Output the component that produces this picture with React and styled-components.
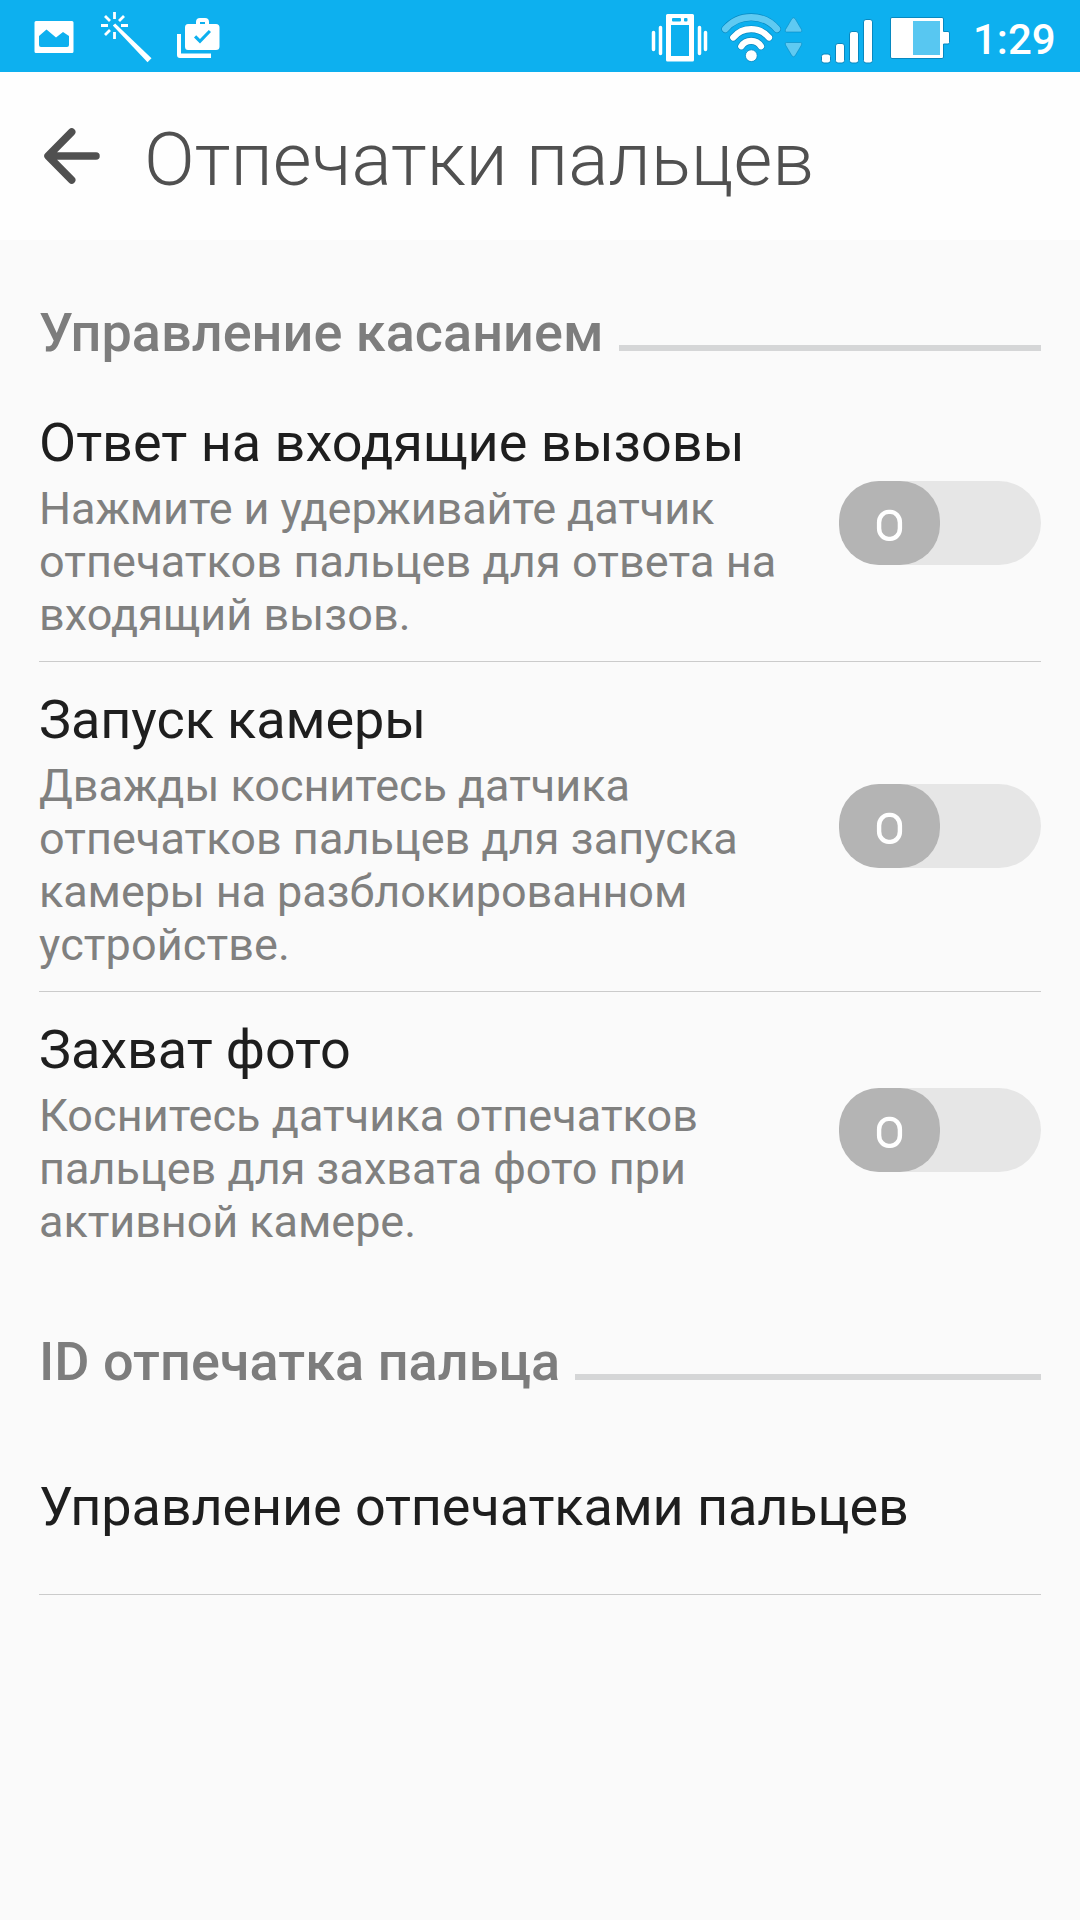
import styled, { createGlobalStyle } from 'styled-components';

const rows = [
  {
    title: 'Ответ на входящие вызовы',
    titleSpacing: 0,
    lines: [
      { text: 'Нажмите и удерживайте датчик', spacing: -0.087 },
      { text: 'отпечатков пальцев для ответа на', spacing: 0.1 },
      { text: 'входящий вызов.', spacing: 0.07 },
    ],
  },
  {
    title: 'Запуск камеры',
    titleSpacing: -0.08,
    lines: [
      { text: 'Дважды коснитесь датчика', spacing: -0.04 },
      { text: 'отпечатков пальцев для запуска', spacing: 0.05 },
      { text: 'камеры на разблокированном', spacing: -0.09 },
      { text: 'устройстве.', spacing: 0.12 },
    ],
  },
  {
    title: 'Захват фото',
    titleSpacing: -0.08,
    lines: [
      { text: 'Коснитесь датчика отпечатков', spacing: 0.04 },
      { text: 'пальцев для захвата фото при', spacing: 0.02 },
      { text: 'активной камере.', spacing: -0.06 },
    ],
    last: true,
  },
];

function LeftIcons() {
  return (
    <svg width="270" height="72" viewBox="0 0 270 72" fill="#fff">
      {/* picture */}
      <path
        fillRule="evenodd"
        d="M36 21h36q1.500 0 1.500 1.500v29q0 1.500-1.500 1.500H36q-1.500 0-1.500-1.500v-29q0-1.500 1.500-1.500ZM39 36v9q0 2 2 2h26q2 0 2-2v-9l-6-4-7 5.500L46.500 29.500Z"
      />
      {/* magic wand */}
      <path
        d="M114.500 12v7M114.500 32v7M101 25.500h7M121 25.500h7M105 16l5 5M124 16l-5 5M105 35l5-5"
        stroke="#fff"
        strokeWidth="2.800"
        fill="none"
      />
      <path d="M112.800 25.500l2.400-2L151.500 58.300l-4 4Z" />
      {/* work bag */}
      <path d="M177 34h4v19.500h30v4.500h-31q-3 0-3-3Z" />
      <path
        fillRule="evenodd"
        d="M188 24h8v-2q0-4 4-4h5q4 0 4 4v2h7q3.500 0 3.500 3.500v19q0 3.500-3.500 3.500h-28q-3 0-3-3.500v-19q0-3.500 3-3.500ZM200 24h5v-2h-5ZM194 37.500l6 6 11-11.500-2.200-2L200 39l-3.800-3.800Z"
      />
    </svg>
  );
}

function RightIcons() {
  return (
    <svg width="310" height="72" viewBox="640 0 310 72" fill="#fff">
      {/* vibration */}
      <path
        fillRule="evenodd"
        d="M667.500 14h25q1.500 0 1.500 1.500v44.500q0 1.500-1.500 1.500h-25q-1.500 0-1.500-1.500v-44.500q0-1.500 1.500-1.500ZM671 25v31h18V25ZM673 18q-1 0-1 1v1.500q0 1 1 1h7q1 0 1-1v-1.500q0-1-1-1ZM685 18q-1 0-1 1v1.500q0 1 1 1h1.500q1 0 1-1v-1.500q0-1-1-1Z"
      />
      <path d="M653.500 32.500v17M660.500 27.500v26M699.500 27.500v26M705.500 32.500v17" stroke="#fff" strokeWidth="3.500" strokeLinecap="round" />
      {/* wifi */}
      <g fill="none" strokeLinecap="round">
        <path d="M725.300 29A34.200 34.200 0 0 1 777 29" stroke="#0788c0" strokeWidth="7.800" />
        <path d="M725.300 29A34.200 34.200 0 0 1 777 29" stroke="#5fcaf2" strokeWidth="6.600" />
        <path d="M733.300 37.500A23.300 23.300 0 0 1 769 37.500" stroke="#0788c0" strokeWidth="7.600" />
        <path d="M733.300 37.500A23.300 23.300 0 0 1 769 37.500" stroke="#fff" strokeWidth="6.300" />
        <path d="M741.300 46.300A11.600 11.600 0 0 1 761 46.300" stroke="#0788c0" strokeWidth="7.600" />
        <path d="M741.300 46.300A11.600 11.600 0 0 1 761 46.300" stroke="#fff" strokeWidth="6.300" />
      </g>
      <circle cx="751.300" cy="55.700" r="5.900" stroke="#0788c0" strokeWidth=".8" />
      <g fill="#5fcaf2" stroke="#0788c0" strokeWidth=".6" strokeLinejoin="round">
        <path d="M792 18.500q1.500-1.500 3 0l6.500 11q1 2.500-1 2.500h-14q-2 0-1-2.500Z" />
        <path d="M786.500 42.500h14q2 0 1 2.500l-6.500 11q-1.500 1.500-3 0l-6.500-11q-1-2.500 1-2.500Z" />
      </g>
      {/* signal and battery */}
      <g stroke="#0788c0" strokeWidth="1">
        <rect x="821.500" y="54" width="9" height="9" rx="2.500" />
        <rect x="835.500" y="43.500" width="9" height="19.500" rx="2.500" />
        <rect x="849.500" y="31.500" width="9" height="31.500" rx="2.500" />
        <rect x="863.500" y="19.500" width="9" height="43.500" rx="2.500" />
        <path d="M892 17.500h50q1.500 0 1.500 1.500v12.500h4.500q1.500 0 1.500 1.500v9.500q0 1.500-1.500 1.500h-4.500v13q0 1.500-1.500 1.500h-50q-1.500 0-1.500-1.500v-38q0-1.500 1.500-1.500Z" />
      </g>
      <rect x="913" y="21" width="27" height="34" fill="#58c7f1" />
    </svg>
  );
}

function Toggle() {
  return (
    <StToggle role="switch" aria-checked="false">
      <StKnob>
        <svg width="27" height="33" viewBox="0 0 27 33">
          <rect x="3.100" y="2.900" width="20.800" height="27" rx="9.500" ry="10.500" fill="none" stroke="#fff" strokeWidth="4.400" />
        </svg>
      </StKnob>
    </StToggle>
  );
}

function Section({ title }) {
  return (
    <StSection>
      <h2>{title}</h2>
      <StRule />
    </StSection>
  );
}

export default function App() {
  return (
    <StScreen>
      <GlobalStyle />
      <StStatusBar>
        <LeftIcons />
        <StStatusRight>
          <RightIcons />
          <StClock>1:29</StClock>
        </StStatusRight>
      </StStatusBar>
      <StHeader>
        <svg width="58" height="58" viewBox="0 0 58 58">
          <path
            d="M28.700 5L5 29l23.700 24M6 29h47"
            fill="none"
            stroke="#505050"
            strokeWidth="7.500"
            strokeLinecap="round"
            strokeLinejoin="round"
          />
        </svg>
        <h1>Отпечатки пальцев</h1>
      </StHeader>
      <StContent>
        <Section title="Управление касанием" />
        {rows.map(({ title, titleSpacing, lines, last }) => (
          <StRow key={title} $last={last}>
            <div>
              <StTitle $spacing={titleSpacing}>{title}</StTitle>
              <StText>
                {lines.map(({ text, spacing }) => (
                  <StLine key={text} $spacing={spacing}>
                    {text}
                  </StLine>
                ))}
              </StText>
            </div>
            <Toggle />
          </StRow>
        ))}
        <Section title="ID отпечатка пальца" />
        <StLink>
          <StTitle $spacing={-0.12}>Управление отпечатками пальцев</StTitle>
        </StLink>
      </StContent>
    </StScreen>
  );
}

const GlobalStyle = createGlobalStyle`
  * {
    box-sizing: border-box;
  }
  body {
    margin: 0;
    background: #fafafa;
    font-family: Roboto, 'Noto Sans', sans-serif;
  }
  h1, h2, h3, p {
    margin: 0;
  }
  svg {
    display: block;
    flex-shrink: 0;
  }
`;
const StScreen = styled.div`
  width: 1080px;
  height: 1920px;
  overflow: hidden;
  background: #fafafa;
`;
const StStatusBar = styled.div`
  display: flex;
  justify-content: space-between;
  height: 72px;
  background: #0db0ef;
`;
const StStatusRight = styled.div`
  display: flex;
  width: 440px;
`;
const StClock = styled.span`
  padding: 7px 0 0 23px;
  font-size: 42px;
  line-height: 66px;
  font-weight: 500;
  color: #fff;
`;
const StHeader = styled.header`
  display: flex;
  height: 168px;
  padding: 0 43px;
  background: #fefefe;
  svg {
    margin-top: 55px;
  }
  h1 {
    margin: 43px 0 0 43px;
    font-size: 75px;
    line-height: 88px;
    font-weight: 300;
    color: #505050;
    white-space: nowrap;
  }
`;
const StContent = styled.main`
  padding: 0 39px;
`;
const StSection = styled.div`
  display: flex;
  gap: 15px;
  height: 145px;
  padding-top: 61px;
  h2 {
    font-size: 54px;
    line-height: 64px;
    font-weight: 500;
    letter-spacing: 0.04px;
    color: #7d7d7d;
    white-space: nowrap;
  }
`;
const StRule = styled.div`
  flex: 1;
  height: 6px;
  margin-top: 44px;
  background: #d5d6d7;
`;
const StRow = styled.div`
  display: flex;
  justify-content: space-between;
  padding: 26px 0 20px;
  border-bottom: 1px solid ${({ $last }) => ($last ? 'transparent' : '#cbcbcb')};
`;
const StTitle = styled.h3`
  font-size: 54px;
  line-height: 64px;
  font-weight: 400;
  letter-spacing: ${({ $spacing }) => $spacing}px;
  color: #1e1e1e;
  white-space: nowrap;
`;
const StText = styled.p`
  margin-top: 7px;
  font-size: 45px;
  line-height: 53px;
  color: #80807f;
`;
const StLine = styled.span`
  display: block;
  letter-spacing: ${({ $spacing }) => $spacing}px;
  white-space: nowrap;
`;
const StToggle = styled.div`
  flex-shrink: 0;
  align-self: center;
  width: 202px;
  height: 84px;
  margin-top: -6.4px;
  border-radius: 42px;
  background: #e6e6e6;
`;
const StKnob = styled.div`
  display: flex;
  align-items: center;
  justify-content: center;
  width: 101px;
  height: 84px;
  padding-top: 5px;
  border-radius: 40px;
  background: #b4b4b4;
`;
const StLink = styled.div`
  height: 181px;
  padding-top: 61px;
  border-bottom: 1px solid #cbcbcb;
`;
